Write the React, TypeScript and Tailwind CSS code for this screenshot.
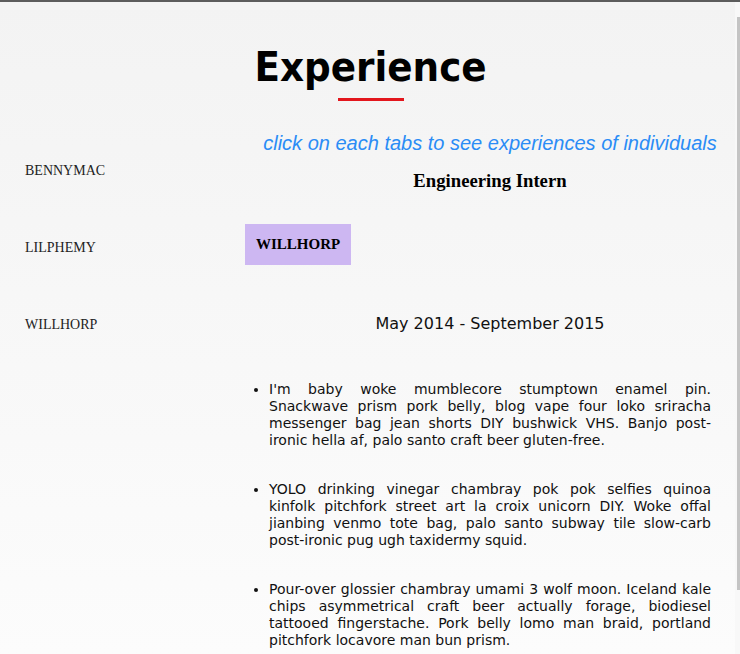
const names = ["BENNYMAC", "LILPHEMY", "WILLHORP"];

const duties = [
  "I'm baby woke mumblecore stumptown enamel pin. Snackwave prism pork belly, blog vape four loko sriracha messenger bag jean shorts DIY bushwick VHS. Banjo post-ironic hella af, palo santo craft beer gluten-free.",
  "YOLO drinking vinegar chambray pok pok selfies quinoa kinfolk pitchfork street art la croix unicorn DIY. Woke offal jianbing venmo tote bag, palo santo subway tile slow-carb post-ironic pug ugh taxidermy squid.",
  "Pour-over glossier chambray umami 3 wolf moon. Iceland kale chips asymmetrical craft beer actually forage, biodiesel tattooed fingerstache. Pork belly lomo man braid, portland pitchfork locavore man bun prism.",
];

export default function App() {
  return (
    <div className="h-[654px] overflow-hidden border-t-2 border-[#5c5c5c] flex bg-gradient-to-b from-[#f3f3f3] to-[#fcfcfc]">
      <main className="flex-1 min-w-0">
        {/* Title */}
        <div className="pt-[41px] flex flex-col items-center pl-[6px]">
          <h2 className="font-['DejaVu_Sans_Condensed','DejaVu_Sans',sans-serif] font-bold text-[41.5px] leading-[47px] text-black">
            Experience
          </h2>
          <div className="mt-[8px] w-[66px] h-[3px] bg-[#e3161d]" />
        </div>

        <div className="flex">
          {/* Person tabs */}
          <div className="w-[245px] shrink-0 pl-[25px] pt-[62px] flex flex-col gap-[61px] font-['Liberation_Serif',serif] text-[14px] leading-4 text-[#222]">
            {names.map((n) => (
              <button key={n} className="text-left cursor-pointer">
                {n}
              </button>
            ))}
          </div>

          {/* Job details */}
          <div className="flex-1 min-w-0">
            <p className="mt-[31px] text-center font-['Liberation_Sans',sans-serif] italic text-[20px] leading-[23px] text-[#2a8cf6]">
              click on each tabs to see experiences of individuals
            </p>
            <h3 className="mt-[15px] text-center font-['Liberation_Serif',serif] font-bold text-[18.72px] leading-[21px] text-black">
              Engineering Intern
            </h3>
            <div className="mt-[33px] flex">
              <span className="h-[41px] px-[11px] flex items-center bg-[#cdb7f2] font-['Liberation_Serif',serif] font-bold text-[15px] text-black">
                WILLHORP
              </span>
            </div>
            <p className="mt-[49px] text-center font-['DejaVu_Sans',sans-serif] text-[16px] leading-[19px] text-[#111]">
              May 2014 - September 2015
            </p>
            <ul className="mt-[48px] pl-[24px] pr-[24px] list-disc font-['DejaVu_Sans',sans-serif] text-[14px] leading-[17px] text-[#111] flex flex-col gap-[32px]">
              {duties.map((d, i) => (
                <li key={i} className="text-justify">
                  {d}
                </li>
              ))}
            </ul>
          </div>
        </div>
      </main>

      {/* scroll track */}
      <div className="w-[5px] shrink-0 bg-[#f8f8f8] flex justify-end">
        <div className="mt-[15px] h-[573px] w-[3px] bg-[#c4c4c4]" />
      </div>
    </div>
  );
}
